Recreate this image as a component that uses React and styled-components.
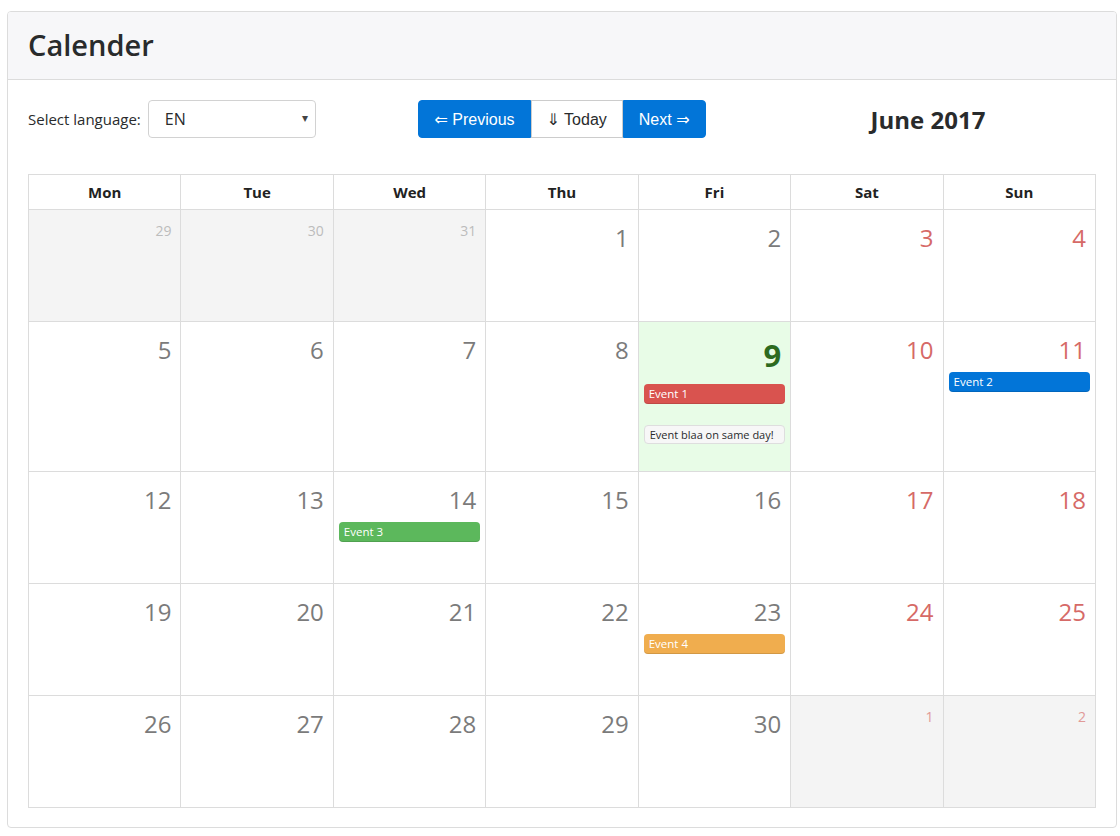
import styled, { createGlobalStyle, css } from "styled-components";

const GlobalStyle = createGlobalStyle`
    html, body {
        margin: 0;
        padding: 0;
        background: #fff;
        font-family: "Open Sans", "Noto Sans", sans-serif;
        color: #292b2c;
    }
`

const weeks = [
    [
        { day: 29, other: true }, { day: 30, other: true }, { day: 31, other: true },
        { day: 1 }, { day: 2 }, { day: 3 }, { day: 4 }
    ],
    [
        { day: 5 }, { day: 6 }, { day: 7 }, { day: 8 },
        { day: 9, today: true, events: [ { title: "Event 1", kind: "danger" }, { title: "Event blaa on same day!", kind: "plain" } ] },
        { day: 10 },
        { day: 11, events: [ { title: "Event 2", kind: "primary" } ] }
    ],
    [
        { day: 12 }, { day: 13 },
        { day: 14, events: [ { title: "Event 3", kind: "success" } ] },
        { day: 15 }, { day: 16 }, { day: 17 }, { day: 18 }
    ],
    [
        { day: 19 }, { day: 20 }, { day: 21 }, { day: 22 },
        { day: 23, events: [ { title: "Event 4", kind: "warning" } ] },
        { day: 24 }, { day: 25 }
    ],
    [
        { day: 26 }, { day: 27 }, { day: 28 }, { day: 29 }, { day: 30 },
        { day: 1, other: true }, { day: 2, other: true }
    ]
];

const weekdays = ["Mon", "Tue", "Wed", "Thu", "Fri", "Sat", "Sun"];

const eventColors = {
    danger: "#d9534f",
    primary: "#0275d8",
    success: "#5cb85c",
    warning: "#f0ad4e",
};

const App = () => {
    return (
        <>
            <GlobalStyle />
            <Card>
                <CardHeader>
                    <Title>Calender</Title>
                </CardHeader>
                <CardBody>
                    <Toolbar>
                        <LanguagePicker>
                            <Label>Select language:</Label>
                            <SelectWrap>
                                <Select defaultValue="EN">
                                    <option>EN</option>
                                    <option>DE</option>
                                    <option>FR</option>
                                </Select>
                                <Caret>▾</Caret>
                            </SelectWrap>
                        </LanguagePicker>
                        <ButtonGroup>
                            <NavButton $primary>⇐ Previous</NavButton>
                            <NavButton>⇓ Today</NavButton>
                            <NavButton $primary>Next ⇒</NavButton>
                        </ButtonGroup>
                        <MonthTitle>June 2017</MonthTitle>
                    </Toolbar>

                    <Grid>
                        { weekdays.map(d => <HeadCell key={d}>{d}</HeadCell>) }
                        { weeks.map((week, w) => week.map((cell, i) => (
                            <DayCell key={`${w}-${i}`} $other={cell.other} $today={cell.today}>
                                <DayNumber $other={cell.other} $today={cell.today} $weekend={i > 4}>
                                    {cell.day}
                                </DayNumber>
                                { (cell.events || []).map(ev => (
                                    <EventPill key={ev.title} $kind={ev.kind}>{ev.title}</EventPill>
                                )) }
                            </DayCell>
                        ))) }
                    </Grid>
                </CardBody>
            </Card>
        </>
    );
}

const Card = styled.div`
    margin: 11px 3px 9px 7px;
    border: 1px solid #dcdcdc;
    border-radius: 4px;
    overflow: hidden;
`

const CardHeader = styled.div`
    background: #f7f7f9;
    border-bottom: 1px solid #dcdcdc;
    padding: 13px 20px 14px;
`

const Title = styled.h1`
    margin: 0;
    font-family: "Open Sans", "Noto Sans", sans-serif;
    font-size: 29px;
    font-weight: 600;
    line-height: 40px;
    color: #292b2c;
`

const CardBody = styled.div`
    padding: 20px 20px 19px;
`

const Toolbar = styled.div`
    display: grid;
    grid-template-columns: repeat(3, minmax(0, 1fr));
    column-gap: 30px;
    align-items: center;
    margin-bottom: 36px;
`

const LanguagePicker = styled.div`
    display: flex;
    align-items: center;
    gap: 7px;
`

const Label = styled.span`
    font-size: 15px;
    color: #292b2c;
`

const SelectWrap = styled.div`
    position: relative;
    width: 168px;
`

const Select = styled.select`
    appearance: none;
    width: 100%;
    height: 38px;
    padding: 0 16px;
    border: 1px solid #d2d2d2;
    border-radius: 4px;
    background: #fff;
    font-family: "Open Sans", "Noto Sans", sans-serif;
    font-size: 16px;
    color: #292b2c;
`

const Caret = styled.span`
    position: absolute;
    right: 8px;
    top: 9px;
    font-size: 12px;
    color: #444;
    pointer-events: none;
`

const ButtonGroup = styled.div`
    display: flex;
    justify-content: center;
`

const NavButton = styled.button`
    height: 38px;
    padding: 0 15px;
    font-family: "Liberation Sans", Arial, "DejaVu Sans", sans-serif;
    font-size: 16px;
    border: 1px solid #ccc;
    background: #fff;
    color: #292b2c;
    border-radius: 0;
    cursor: pointer;

    ${p => p.$primary && css`
        background: #0275d8;
        border-color: #0275d8;
        color: #fff;
    `}

    &:first-child { border-radius: 4px 0 0 4px; }
    &:last-child { border-radius: 0 4px 4px 0; }
`

const MonthTitle = styled.h2`
    margin: 0;
    text-align: center;
    font-size: 24px;
    font-weight: 700;
    color: #292b2c;
`

const Grid = styled.div`
    display: grid;
    grid-template-columns: repeat(7, minmax(0, 1fr));
    border-top: 1px solid #dcdcdc;
    border-left: 1px solid #dcdcdc;
`

const HeadCell = styled.div`
    height: 35px;
    box-sizing: border-box;
    display: flex;
    align-items: center;
    justify-content: center;
    font-size: 15px;
    font-weight: 700;
    color: #222;
    border-right: 1px solid #dcdcdc;
    border-bottom: 1px solid #dcdcdc;
`

const DayCell = styled.div`
    min-height: 112px;
    padding: 8px 4px 23px;
    box-sizing: border-box;
    border-right: 1px solid #dcdcdc;
    border-bottom: 1px solid #dcdcdc;
    background: ${p => p.$today ? "#e8fce7" : p.$other ? "#f4f4f4" : "#fff"};
`

const DayNumber = styled.div`
    text-align: right;
    padding-right: 5px;
    font-size: 24px;
    line-height: 39px;
    font-weight: 400;
    color: ${p => p.$weekend ? "#d66a67" : "#7b7b7b"};
    margin-bottom: 3px;

    ${p => p.$other && css`
        font-size: 14px;
        line-height: 26px;
        color: ${p.$weekend ? "#e19a97" : "#bcbcbc"};
    `}

    ${p => p.$today && css`
        font-size: 31px;
        line-height: 50px;
        font-weight: 700;
        color: #2d6a1f;
        margin-bottom: 4px;
    `}
`

const EventPill = styled.div`
    height: 20px;
    line-height: 20px;
    padding: 0 5px;
    margin: 0 1px 4px;
    border-radius: 4px;
    font-size: 11.5px;
    white-space: nowrap;
    overflow: hidden;
    color: #fff;
    background: ${p => eventColors[p.$kind] || "#f7f7f7"};
    box-shadow: inset 0 -1px 0 rgba(0,0,0,0.12);

    ${p => p.$kind === "plain" && css`
        margin-top: 21px;
        color: #292b2c;
        border: 1px solid #dedede;
        height: 17px;
        line-height: 17px;
        font-size: 11px;
        box-shadow: none;
    `}
`

export default App;
